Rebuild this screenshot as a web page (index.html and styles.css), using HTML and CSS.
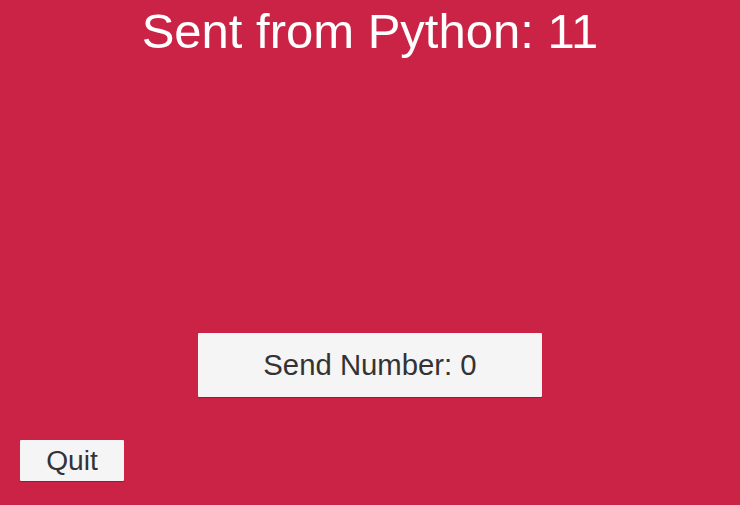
FILE: index.html
```html
<!DOCTYPE html>
<html>
<head>
<meta charset="utf-8">
<link rel="stylesheet" href="styles.css">
</head>
<body>
<main class="screen">
  <h1 class="title">Sent from Python: 11</h1>
  <button class="btn send">Send Number: 0</button>
  <button class="btn quit">Quit</button>
</main>
</body>
</html>
```
FILE: styles.css
```css
html, body {
  margin: 0;
  padding: 0;
}
body {
  background: #CB2346;
  font-family: "Liberation Sans", Arial, sans-serif;
}
.screen {
  width: 740px;
  height: 505px;
  display: flex;
  flex-direction: column;
  overflow: hidden;
}
.title {
  margin: 0;
  font-weight: normal;
  font-size: 49px;
  line-height: 63px;
  height: 61px;
  color: #ffffff;
  text-align: center;
}
.btn {
  border: none;
  padding: 0;
  margin: 0;
  background: #F5F5F5;
  color: #333333;
  font-family: "Liberation Sans", Arial, sans-serif;
  border-radius: 1px;
  box-shadow: 0 1px 0 rgba(0,0,0,0.25);
}
.send {
  align-self: center;
  width: 344px;
  height: 64px;
  margin-top: 272px;
  font-size: 29.3px;
  line-height: 64px;
}
.quit {
  align-self: flex-start;
  width: 104px;
  height: 41px;
  margin-top: 43px;
  margin-left: 20px;
  font-size: 28.2px;
  line-height: 41px;
}
```
